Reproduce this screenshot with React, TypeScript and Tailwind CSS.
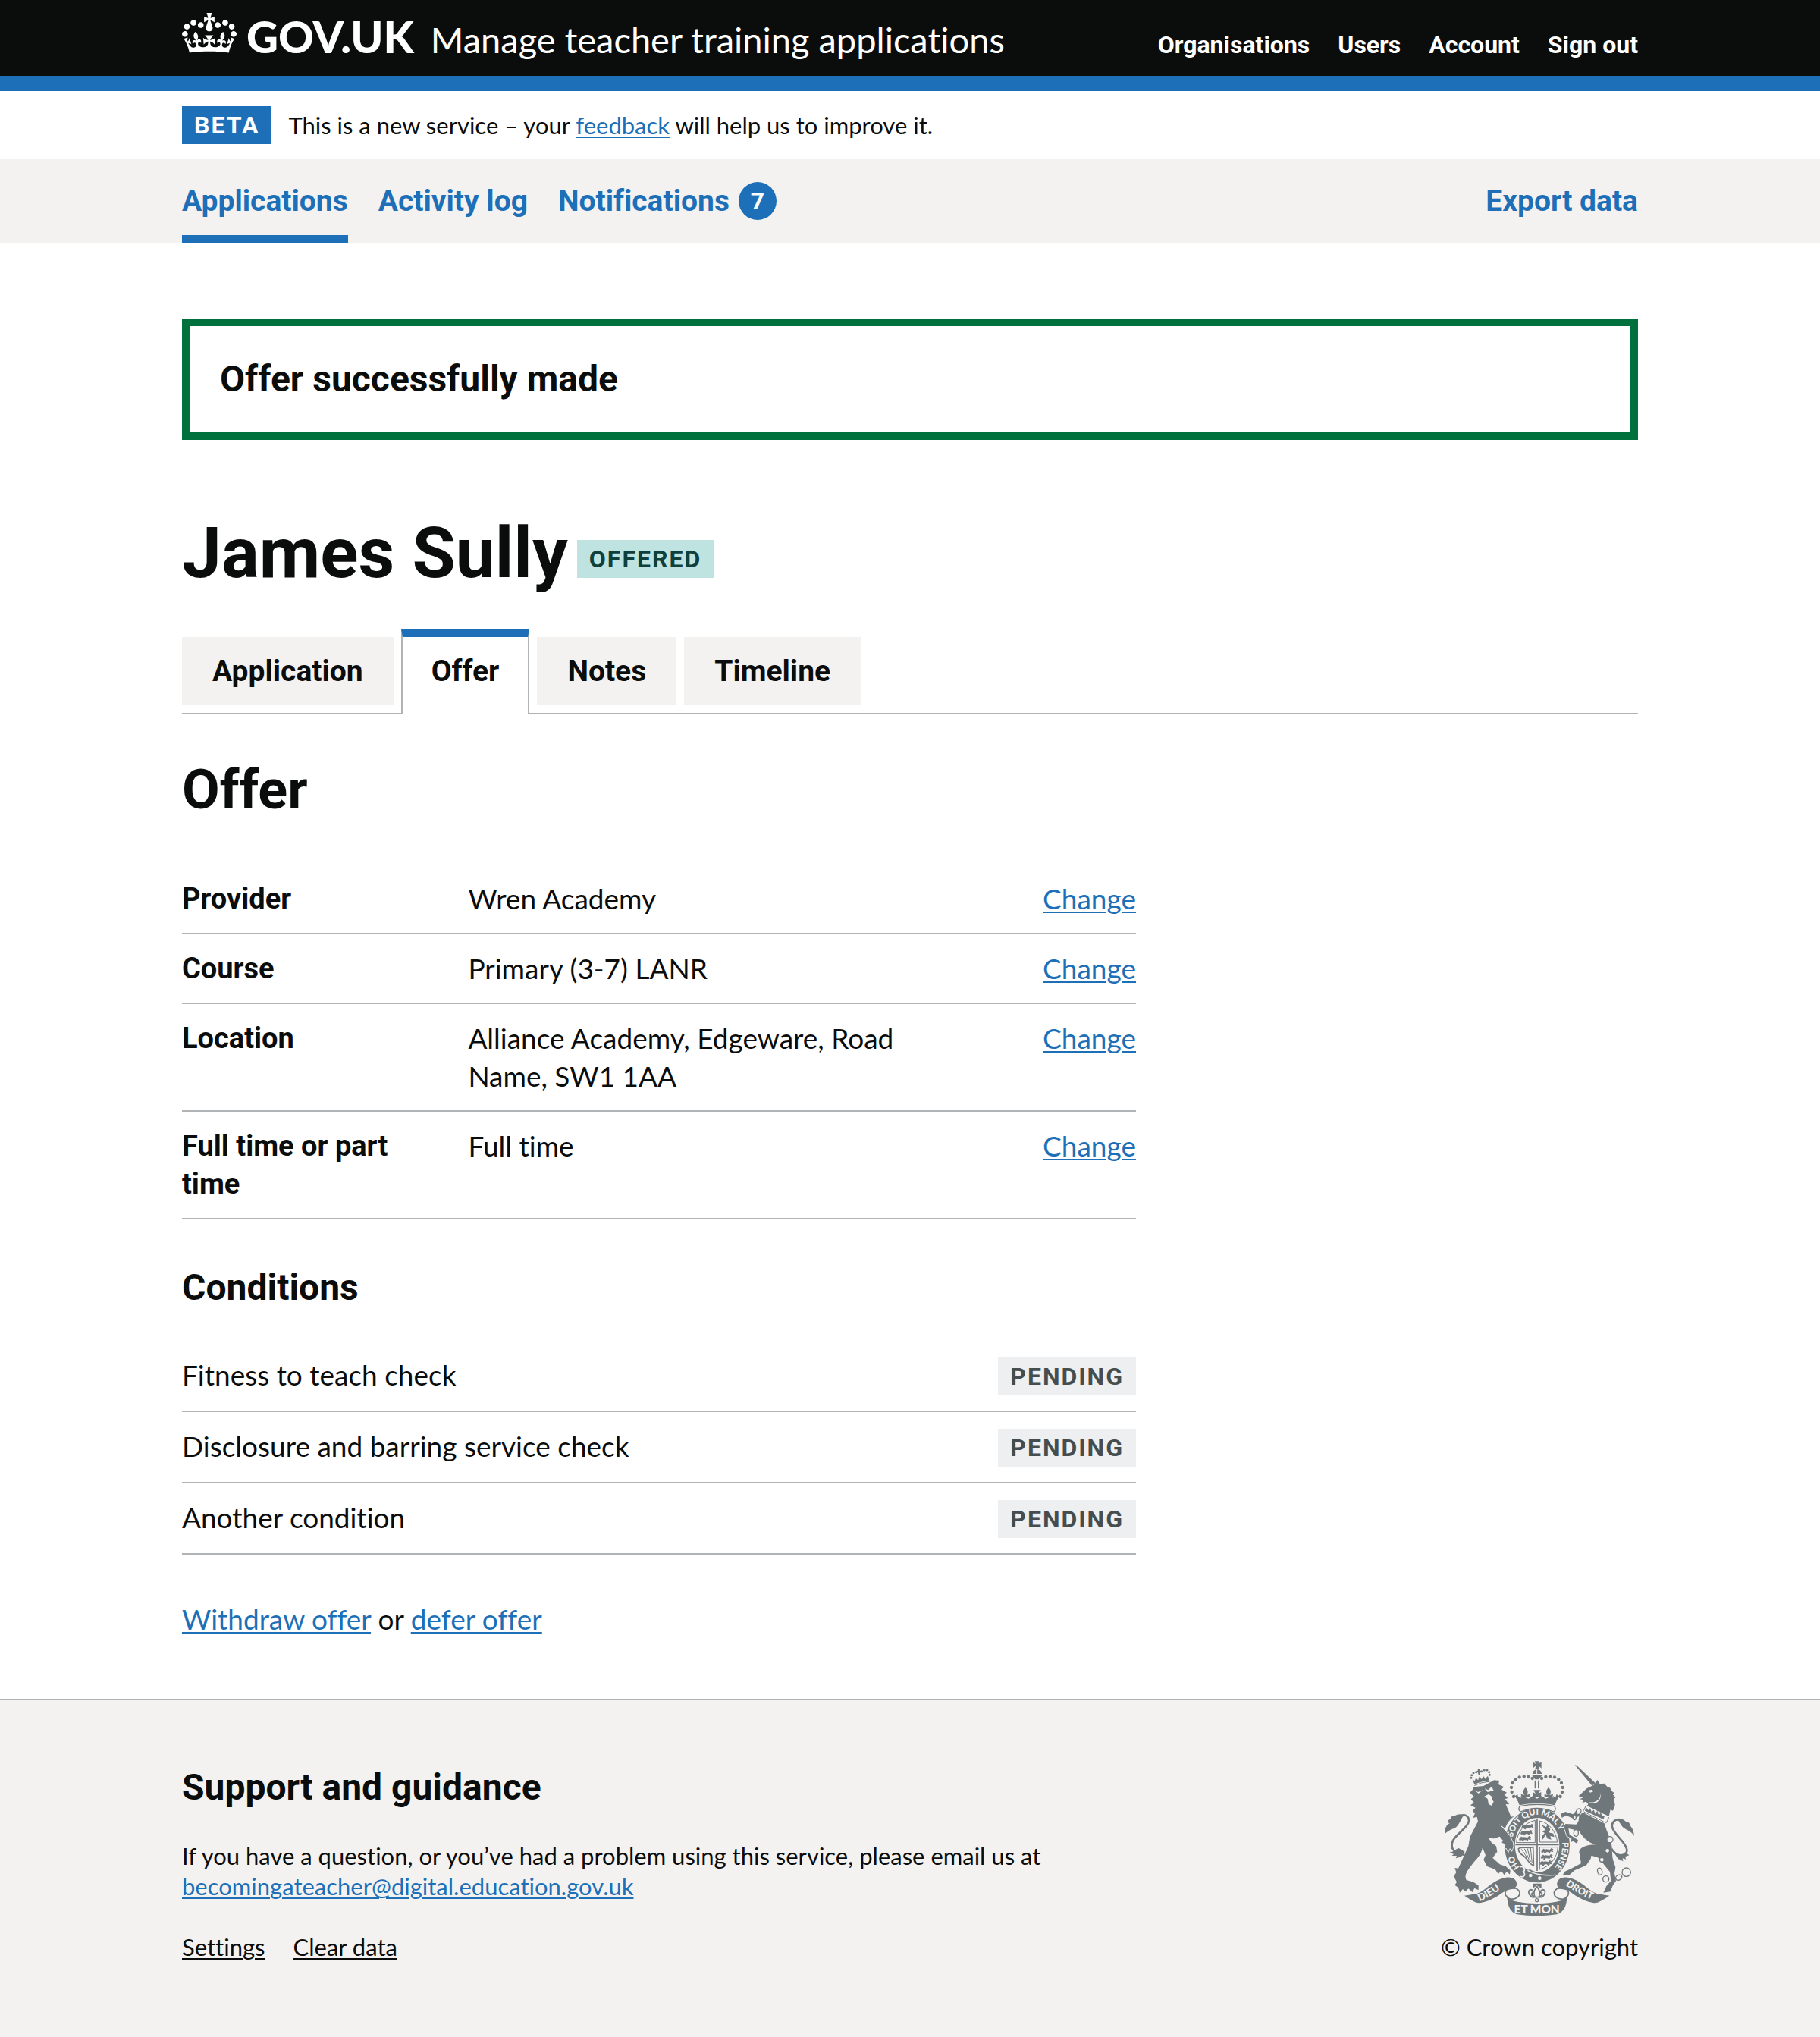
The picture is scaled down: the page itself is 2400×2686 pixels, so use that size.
import type { ReactNode } from "react";

const BODY = "font-['Lato','Liberation_Sans',sans-serif] [font-variant-ligatures:none]";
const BOLD = "font-['Roboto','Liberation_Sans',sans-serif] font-bold";
const LINK = "underline decoration-2 underline-offset-[3px]";

function Container({ className = "", children }: { className?: string; children: ReactNode }) {
  return <div className={`mx-auto w-full max-w-[2000px] px-10 ${className}`}>{children}</div>;
}

function CrownIcon() {
  return (
    <svg viewBox="0 0 132 97" className="-mb-[5px] h-[53px] w-[72px] shrink-0" aria-hidden="true">
      <path
        fill="currentColor"
        fillRule="evenodd"
        d="M25 30.2c3.5 1.5 7.7-.2 9.1-3.7 1.5-3.6-.2-7.8-3.9-9.2-3.6-1.4-7.6.3-9.1 3.9-1.4 3.5.3 7.5 3.9 9zM9 39.5c3.6 1.5 7.8-.2 9.2-3.7 1.5-3.6-.2-7.8-3.9-9.1-3.6-1.5-7.6.2-9.1 3.8-1.4 3.5.3 7.5 3.8 9zM4.4 57.2c3.5 1.5 7.7-.2 9.1-3.8 1.5-3.6-.2-7.7-3.9-9.1-3.5-1.5-7.6.3-9.1 3.8-1.4 3.5.3 7.6 3.9 9.1zm38.3-21.4c3.5 1.5 7.7-.2 9.1-3.8 1.5-3.6-.2-7.7-3.9-9.1-3.6-1.5-7.6.3-9.1 3.8-1.3 3.6.4 7.7 3.9 9.1zm64.4-5.6c-3.6 1.5-7.8-.2-9.1-3.7-1.5-3.6.2-7.8 3.8-9.2 3.6-1.4 7.7.3 9.2 3.9 1.3 3.5-.4 7.5-3.9 9zm15.9 9.3c-3.6 1.5-7.7-.2-9.1-3.7-1.5-3.6.2-7.8 3.7-9.1 3.6-1.5 7.7.2 9.2 3.8 1.5 3.5-.3 7.5-3.8 9zm4.7 17.7c-3.6 1.5-7.8-.2-9.2-3.8-1.5-3.6.2-7.7 3.9-9.1 3.6-1.5 7.7.3 9.2 3.8 1.3 3.5-.4 7.6-3.9 9.1zM89.3 35.8c-3.6 1.5-7.8-.2-9.2-3.8-1.4-3.6.2-7.7 3.9-9.1 3.6-1.5 7.7.3 9.2 3.8 1.4 3.6-.3 7.7-3.9 9.1zM69.7 17.7l8.9 4.7V9.3l-8.9 2.8c-.2-.3-.5-.6-.9-.9L72.4 0H59.6l3.5 11.2c-.3.3-.6.5-.9.9l-8.8-2.8v13.1l8.8-4.7c.3.3.6.7.9.9l-5 15.4v.1c-.2.8-.4 1.6-.4 2.4 0 4.1 3.1 7.5 7 8.1h.2c.3 0 .7.1 1 .1.4 0 .7 0 1-.1h.2c4-.6 7.1-4.1 7.1-8.1 0-.8-.1-1.7-.4-2.4V34l-5.1-15.4c.4-.2.7-.6 1-.9zM66 92.8c16.9 0 32.8 1.1 47.1 3.2 4-16.9 8.9-26.7 14-33.5l-9.6-3.4c1 4.9 1.1 7.2 0 10.2-1.5-1.4-3-4.3-4.2-8.7L108.6 76c2.8-2 5-3.2 7.5-3.3-4.4 9.4-10 11.9-13.6 11.2-4.3-.8-6.3-4.6-5.6-7.9 1-4.7 5.7-5.9 8-.5 4.3-8.7-3-11.4-7.6-8.8 7.1-7.2 7.9-13.5 2.1-21.1-8 6.1-8.1 12.3-4.5 20.8-4.7-5.4-12.1-2.5-9.5 6.2 3.4-5.2 7.9-2 7.2 3.1-.6 4.3-6.4 7.8-13.5 7.2-10.3-.9-10.9-8-11.2-13.8 2.5-.5 7.1 1.8 11 7.3L80.2 60c-4.1 4.4-8 5.3-12.3 5.4 1.4-4.4 8-11.6 8-11.6H55.5s6.4 7.2 7.9 11.6c-4.2-.1-8-1-12.3-5.4l1.4 16.4c3.9-5.5 8.5-7.7 10.9-7.3-.3 5.8-.9 12.8-11.1 13.8-7.2.6-12.9-2.9-13.5-7.2-.7-5 3.8-8.3 7.1-3.1 2.7-8.7-4.6-11.6-9.4-6.2 3.7-8.5 3.6-14.7-4.6-20.8-5.8 7.6-5 13.9 2.2 21.1-4.7-2.6-11.9.1-7.7 8.8 2.3-5.5 7.1-4.2 8.1.5.7 3.3-1.3 7.1-5.7 7.9-3.5.7-9-1.8-13.5-11.2 2.5.1 4.7 1.3 7.5 3.3l-4.7-15.4c-1.2 4.4-2.7 7.2-4.3 8.7-1.1-3-.9-5.3 0-10.2l-9.5 3.4c5 6.9 9.9 16.7 14 33.5 14.8-2.1 30.8-3.2 47.7-3.2z"
      />
    </svg>
  );
}

const PEARLS = [
  [345, 206], [338, 188], [336, 170], [341, 152], [352, 138], [368, 129], [386, 126], [403, 128], [419, 134],
];
const RIBBON =
  "M150 598 L200 590 C240 574 262 536 312 527 C340 522 360 534 357 556 C354 572 335 570 320 574 C292 590 262 618 215 626 C195 630 172 612 150 598 Z";
const RIBBON_FOLD =
  "M318 574 C306 588 312 604 334 612 L350 610 C372 600 376 582 356 570 C344 566 330 570 318 574 Z";

function Lion() {
  return (
    <g>
      {/* crown */}
      <path d="M190 158 L182 138 L191 144 L196 132 L204 141 L210 126 L218 137 L227 126 L232 136 L243 124 L248 142 Q218 144 190 158 Z" />
      <path d="M190 162 Q218 148 252 146" fill="none" stroke="currentColor" strokeWidth="3" />
      {[[177, 132], [179, 121], [186, 112], [197, 109], [218, 106], [229, 101], [240, 101], [248, 109], [250, 120]].map(([x, y]) => (
        <circle key={`${x}-${y}`} cx={x} cy={y} r="4.5" />
      ))}
      <path d="M203 95 l4 3 5-2 -1 7 6 2 -2 6 -5-1 1 12 -5 0 -2-12 -6 2 0-6 5-3 z" />
      {/* head, mane and body */}
      <path
        fillRule="evenodd"
        stroke="#f3f2f1"
        strokeWidth="5"
        className="[paint-order:stroke]"
        d="M172 190 L182 180 L188 168 L226 164 L268 141 L288 143 L285 158 L306 167 L297 178 L318 190 L308 198 L322 212 L311 216 L328 237 L314 236 C322 258 330 270 334 286 L346 284 C330 296 318 312 311 332 L288 314 L330 362 L342 388 L344 404 L338 420 L330 410 L324 424 L316 410 L308 412 L313 394 L298 388 L303 380 L290 364 L268 372 L246 370 L258 388 L276 402 L280 424 L262 448 L290 474 L314 482 L332 498 L330 514 L318 502 L308 516 L296 500 L284 512 L272 494 L240 482 L226 456 L234 438 L222 408 C216 440 196 454 178 478 C162 498 148 518 158 536 L186 544 L206 558 L206 576 L190 568 L182 584 L166 570 L154 582 L144 572 L132 586 L126 566 L112 556 L120 544 L108 522 L118 506 L112 488 L126 490 L146 446 L166 402 L172 366 L204 304 L200 286 L184 290 L192 272 L182 262 L194 250 L174 240 L188 230 L176 216 L188 206 Z M190 180 L204 188 L222 180 L206 194 Z M230 174 L244 180 L258 166 L266 182 L242 188 Z M228 206 L246 196 L262 208 L258 214 L266 226 L258 242 L246 236 L242 214 Z"
      />
      {/* tail */}
      <path
        d="M148 436 C112 430 92 412 104 382 C118 352 160 334 168 304 C170 282 150 272 130 284"
        fill="none"
        stroke="currentColor"
        strokeWidth="8"
      />
      <path d="M72 354 C74 330 78 318 92 312 C80 308 86 296 98 294 C94 286 104 280 112 282 C126 274 140 274 148 282 C138 290 136 306 122 322 C108 338 96 330 72 354 Z" />
      <path d="M90 424 C106 430 116 412 128 410 L152 424 L138 444 L116 450 L120 440 L100 440 L108 434 Z" />
    </g>
  );
}

function Unicorn() {
  return (
    <g>
      <path d="M587 81 L595 83 L668 152 L656 164 Z" />
      {/* head and mane */}
      <path
        fillRule="evenodd"
        d="M602 204 L634 174 L662 160 L676 140 L686 156 L704 154 L716 168 L728 172 L730 182 L742 190 L738 198 L748 210 L742 214 L746 240 L738 262 L728 258 L722 284 L632 246 L640 236 L632 226 L616 230 L622 219 L606 216 L620 210 Z M640 182 L656 178 L660 186 L648 190 Z M690 190 C690 218 668 232 642 228 C668 242 694 222 690 190 Z"
      />
      {/* coronet collar */}
      <path d="M630 240 L724 286 L712 312 L620 264 Z" fill="#f3f2f1" />
      <path d="M630 244 L622 262 M722 288 L712 310 M622 266 L710 310" fill="none" stroke="currentColor" strokeWidth="3" />
      <path d="M627 262 l5-14 8 12 8-8 6 16 8-10 6 16 8-12 6 18 8-10 6 14 10-4 -6 16z" />
      {/* body and hind legs */}
      <path
        stroke="#f3f2f1"
        strokeWidth="5"
        className="[paint-order:stroke]"
        d="M618 268 L704 312 C712 340 722 358 728 384 C738 402 732 430 738 456 L748 486 L744 510 L750 540 L738 556 L728 582 L700 586 L712 560 L730 540 L726 504 L700 472 C690 450 676 444 652 440 L650 452 L632 478 L586 498 L566 516 L538 518 L548 502 L574 490 L612 470 L604 424 C608 404 640 396 668 396 C640 388 616 366 604 342 L562 332 L566 356 L600 378 L596 392 L580 382 L572 386 L574 372 L556 362 L544 326 L550 314 L592 316 C604 306 602 298 604 284 Z"
      />
      <path d="M604 284 L580 292 L552 280 L536 290 L532 274 L550 266 L580 276 L592 262 L612 262 Z" />
      {/* tail */}
      <path
        d="M732 412 C756 452 800 440 792 412 C784 380 736 352 734 322 C736 298 760 290 778 302"
        fill="none"
        stroke="currentColor"
        strokeWidth="8"
      />
      <path d="M822 362 C820 338 812 326 804 320 C806 308 796 304 790 306 C782 296 768 292 754 296 C766 306 768 322 784 332 C800 342 810 344 822 362 Z" />
      <path d="M744 430 C764 442 776 438 786 426 L802 438 L786 444 L790 454 L776 450 L778 462 L758 452 Z" />
      {/* chain */}
      <g fill="#f3f2f1" stroke="currentColor" strokeWidth="4">
        <ellipse cx="602" cy="265" rx="9" ry="12" transform="rotate(30 602 265)" />
        <ellipse cx="586" cy="288" rx="6" ry="10" />
        <ellipse cx="592" cy="350" rx="9" ry="13" />
        <circle cx="726" cy="376" r="12" />
        <circle cx="716" cy="420" r="9" />
        <circle cx="694" cy="456" r="9" />
        <ellipse cx="686" cy="502" rx="9" ry="14" transform="rotate(-15 686 502)" />
        <circle cx="710" cy="532" r="12" />
        <ellipse cx="761" cy="526" rx="13" ry="10" transform="rotate(-30 761 526)" />
        <circle cx="791" cy="505" r="17" />
      </g>
    </g>
  );
}

function RoyalCrown() {
  const half = (
    <g>
      {PEARLS.map(([x, y]) => (
        <circle key={`${x}-${y}`} cx={x} cy={y} r="6.5" />
      ))}
      <path d="M392 170 C402 180 404 190 396 200 L408 196 L408 208 L376 208 L374 196 L388 200 C380 190 382 180 392 170 Z" />
      <path d="M352 204 L360 196 L364 208 L374 204 L372 218 L360 216 Z" />
    </g>
  );
  return (
    <g>
      <path d="M420 68 L432 77 L428 66 H447 L443 77 L455 68 L455 94 L443 84 L446 98 L430 98 L433 84 L420 94 Z" />
      <path d="M420 116 A18 18 0 0 1 456 116 Z M418 122 L458 122 L444 138 L430 138 Z" />
      <path d="M437 98 V118" stroke="#f3f2f1" strokeWidth="3" />
      <path d="M428 142 h6 v32 h-6z M441 142 h6 v32 h-6z" />
      {half}
      <g transform="translate(875 0) scale(-1 1)">{half}</g>
      <path d="M424 180 L452 180 L443 194 L454 188 L454 208 L420 208 L420 188 L432 194 Z" />
      <path d="M346 196 L366 214 L384 206 L404 214 L420 204 L438 214 L456 204 L472 214 L492 206 L510 214 L530 196 C518 216 512 228 508 240 Q437 226 368 240 C364 226 356 214 346 196 Z" />
      <path d="M370 244 Q437 230 506 244 Q516 256 504 266 Q437 238 372 266 Q360 256 370 244 Z" fill="#f3f2f1" stroke="currentColor" strokeWidth="4" />
    </g>
  );
}

const PASSANT = "M0 6 l8-6 6 4 4-2 14 2 6-6 8 4 -4 4 4 6 -6 2 -4-4 -4 8 -6-4 -8 0 -4 6 -6-2 2-6 -6 4 -6-2z";

function Shield() {
  return (
    <g>
      <ellipse cx="438" cy="398" rx="135" ry="155" fill="#f3f2f1" />
      <ellipse cx="438" cy="398" rx="129" ry="148" />
      <ellipse cx="438" cy="398" rx="88" ry="108" fill="#f3f2f1" />
      <path d="M438 292 V500 M352 396 H524" fill="none" stroke="currentColor" strokeWidth="5" />
      <path
        d="M430 300 V388 H356 C358 350 388 308 430 300 Z M448 406 H520 C518 446 490 484 448 494 Z M448 302 C488 310 514 348 518 386 H448 Z"
        fill="none"
        stroke="currentColor"
        strokeWidth="3"
      />
      {[[378, 316], [374, 340], [368, 364], [456, 412], [454, 436], [450, 460]].map(([x, y]) => (
        <path key={`${x}-${y}`} d={PASSANT} transform={`translate(${x} ${y})`} />
      ))}
      <path d="M456 318 L474 326 L480 316 L490 336 L484 348 L502 352 L506 366 L490 362 L494 376 L478 372 L472 356 L460 376 L456 364 L468 350 L458 344 L470 338 Z" />
      <path d="M364 412 C378 402 400 412 422 406 L424 478 C404 474 402 452 384 440 C370 432 364 424 364 412 Z" fill="none" stroke="currentColor" strokeWidth="5" />
      <path d="M376 414 L396 444 M388 412 L406 456 M400 412 L412 464 M412 410 L418 470" stroke="currentColor" strokeWidth="3" />
      {/* buckle and strap */}
      <path d="M362 480 C380 500 396 500 410 494 C430 506 450 508 480 508 L500 520 C470 548 420 552 372 524 C380 512 368 500 362 480 Z" />
      <path d="M372 484 C390 480 392 500 382 504 C396 512 386 528 370 522" fill="none" stroke="#f3f2f1" strokeWidth="5" />
      <path d="M400 498 C430 514 470 520 512 516" fill="none" stroke="#f3f2f1" strokeWidth="4" />
      <circle cx="412" cy="518" r="7" fill="#f3f2f1" />
      <circle cx="448" cy="529" r="7" fill="#f3f2f1" />
      <path id="garter" d="M438 518 A100 120 0 0 1 438 278 A100 120 0 0 1 438 518" fill="none" />
      <g fill="#f3f2f1" className="font-['Lato',sans-serif] text-[34px] font-black">
        <text>
          <textPath href="#garter" startOffset="78">HO</textPath>
        </text>
        <text>
          <textPath href="#garter" startOffset="204">SOIT QUI MAL Y</textPath>
        </text>
        <text>
          <textPath href="#garter" startOffset="508">PENSE</textPath>
        </text>
      </g>
    </g>
  );
}

function RoyalArms() {
  return (
    <svg
      viewBox="72 65 750 615"
      className="h-[205px] w-[250px] text-[#6f777b]"
      fill="currentColor"
      role="img"
      aria-label="Royal coat of arms"
    >
      <Shield />
      <RoyalCrown />
      <Lion />
      <Unicorn />
      {/* ribbons and motto */}
      <path d={RIBBON} />
      <path d={RIBBON_FOLD} fill="#f3f2f1" stroke="currentColor" strokeWidth="5" />
      <g transform="translate(874 0) scale(-1 1)">
        <path d={RIBBON} />
        <path d={RIBBON_FOLD} fill="#f3f2f1" stroke="currentColor" strokeWidth="5" />
      </g>
      <path d="M318 596 Q326 618 360 622 Q437 636 514 622 Q548 618 556 596 C556 640 544 662 516 672 Q437 684 358 672 C332 662 322 644 318 596 Z" />
      <path id="dieu" d="M210 620 Q258 602 308 560" fill="none" />
      <path id="droit" d="M550 556 Q602 594 676 622" fill="none" />
      <g fill="#f3f2f1" className="font-['Lato',sans-serif] text-[40px] font-black">
        <text>
          <textPath href="#dieu">DIEU</textPath>
        </text>
        <text className="text-[38px]">
          <textPath href="#droit">DROIT</textPath>
        </text>
        <text x="437" y="668" textAnchor="middle" className="text-[46px]">ET MON</text>
      </g>
      {/* fleur-de-lis */}
      <path d="M421 550 H455 V570 C446 562 442 562 437 556 C432 562 428 562 421 570 Z" />
      <path
        d="M437 562 C450 576 450 588 446 600 C454 602 460 594 456 588 C450 588 450 576 460 574 C474 576 472 594 456 604 H418 C402 594 400 576 414 574 C424 576 424 588 418 588 C414 594 420 602 428 600 C424 588 424 576 437 562 Z"
        fill="none"
        stroke="currentColor"
        strokeWidth="5"
      />
      <circle cx="437" cy="616" r="6" fill="#f3f2f1" stroke="currentColor" strokeWidth="4" />
    </svg>
  );
}

function Tag({ className, children }: { className: string; children: ReactNode }) {
  return (
    <strong className={`${BOLD} inline-block px-4 text-[32px] leading-[50px] tracking-[2px] uppercase ${className}`}>{children}</strong>
  );
}

const SUMMARY = [
  { key: "Provider", value: "Wren Academy" },
  { key: "Course", value: "Primary (3-7) LANR" },
  { key: "Location", value: "Alliance Academy, Edgeware, Road Name, SW1 1AA" },
  { key: "Full time or part time", value: "Full time" },
];
const CONDITIONS = ["Fitness to teach check", "Disclosure and barring service check", "Another condition"];
const TABS = ["Application", "Offer", "Notes", "Timeline"];

export default function App() {
  return (
    <div className={`${BODY} flex min-h-screen flex-col bg-white text-[37px] leading-[50px] text-[#0b0c0c]`}>
      <header className="border-b-[20px] border-[#1d70b8] bg-[#0b0c0c] text-white">
        <Container className="flex h-[100px] items-baseline justify-between">
          <div className="flex items-baseline">
            <a href="#" className="flex items-baseline gap-[13px]">
              <CrownIcon />
              <span className="text-[58px] leading-[96px] font-black">GOV.UK</span>
            </a>
            <a href="#" className="ml-[22px] text-[47px]">Manage teacher training applications</a>
          </div>
          <nav className={`${BOLD} flex gap-[37px] text-[32px]`}>
            {["Organisations", "Users", "Account", "Sign out"].map((t) => (
              <a key={t} href="#">{t}</a>
            ))}
          </nav>
        </Container>
      </header>

      <Container className="flex items-center gap-[22px] py-5 text-[31px]">
        <Tag className="bg-[#1d70b8] text-white">Beta</Tag>
        <p>
          This is a new service – your <a href="#" className={`${LINK} text-[#1d70b8]`}>feedback</a> will help us to improve it.
        </p>
      </Container>

      <div className="bg-[#f3f2f1]">
        <Container className={`${BOLD} flex h-[110px] items-stretch gap-10 text-[39px] leading-[110px] text-[#1d70b8]`}>
          <a href="#" aria-current="page" className="border-b-[10px] border-[#1d70b8]">Applications</a>
          <a href="#">Activity log</a>
          <a href="#" className="flex items-center gap-3">
            Notifications
            <span className="size-[50px] rounded-full bg-[#1d70b8] text-center text-[32px] leading-[50px] text-white">7</span>
          </a>
          <a href="#" className="ml-auto">Export data</a>
        </Container>
      </div>

      <main>
        <Container className="pt-[100px] pb-20">
          <div role="alert" className={`${BOLD} border-[10px] border-[#00703c] px-10 py-10 text-[48px] leading-[60px]`}>
            Offer successfully made
          </div>

          <h1 className={`${BOLD} mt-[100px] flex items-end gap-3 text-[93px] leading-[100px]`}>
            James Sully
            <Tag className="mb-[18px] bg-[#bfe3e0] text-[#10403c]">Offered</Tag>
          </h1>

          <nav className={`${BOLD} mt-[60px] flex gap-[10px] border-b-2 border-[#b1b4b6] text-[39px]`}>
            {TABS.map((t) =>
              t === "Offer" ? (
                <a
                  key={t}
                  href="#"
                  aria-current="page"
                  className="-mt-[10px] -mb-[2px] border-x-2 border-t-[10px] border-x-[#b1b4b6] border-t-[#1d70b8] bg-white px-[38px] pt-5 pb-8"
                >
                  {t}
                </a>
              ) : (
                <a key={t} href="#" className="mb-[10px] bg-[#f3f2f1] px-10 py-5">{t}</a>
              ),
            )}
          </nav>

          <div className="max-w-[1258px]">
            <h2 className={`${BOLD} mt-[60px] text-[72px] leading-[80px]`}>Offer</h2>
            <dl className="mt-[58px]">
              {SUMMARY.map(({ key, value }) => (
                <div key={key} className="flex border-b-2 border-[#b1b4b6] py-5">
                  <dt className={`${BOLD} w-[30%] pr-10 text-[38px]`}>{key}</dt>
                  <dd className="w-[50%] pr-10">{value}</dd>
                  <dd className="w-[20%] text-right">
                    <a href="#" aria-label={`Change ${key}`} className={`${LINK} text-[#1d70b8]`}>Change</a>
                  </dd>
                </div>
              ))}
            </dl>

            <h3 className={`${BOLD} mt-[60px] text-[48px] leading-[60px]`}>Conditions</h3>
            <ul className="mt-10">
              {CONDITIONS.map((c) => (
                <li key={c} className="flex justify-between border-b-2 border-[#b1b4b6] py-5">
                  {c}
                  <Tag className="mt-0.5 bg-[#eeeff0] text-[#454d4e]">Pending</Tag>
                </li>
              ))}
            </ul>

            <p className="mt-[60px]">
              <a href="#" className={`${LINK} text-[#1d70b8]`}>Withdraw offer</a> or{" "}
              <a href="#" className={`${LINK} text-[#1d70b8]`}>defer offer</a>
            </p>
          </div>
        </Container>
      </main>

      <footer className="grow border-t-2 border-[#b1b4b6] bg-[#f3f2f1] text-[31px] leading-[40px]">
        <Container className="flex items-end justify-between pt-20">
          <div>
            <h2 className={`${BOLD} text-[48px] leading-[60px]`}>Support and guidance</h2>
            <p className="mt-10">
              If you have a question, or you’ve had a problem using this service, please email us at
              <br />
              <a href="#" className={`${LINK} text-[#1d70b8]`}>becomingateacher@digital.education.gov.uk</a>
            </p>
            <ul className="mt-10 flex gap-[37px]">
              <li><a href="#" className={LINK}>Settings</a></li>
              <li><a href="#" className={LINK}>Clear data</a></li>
            </ul>
          </div>
          <a href="#" className="flex flex-col items-center gap-5">
            <RoyalArms />
            © Crown copyright
          </a>
        </Container>
      </footer>
    </div>
  );
}
